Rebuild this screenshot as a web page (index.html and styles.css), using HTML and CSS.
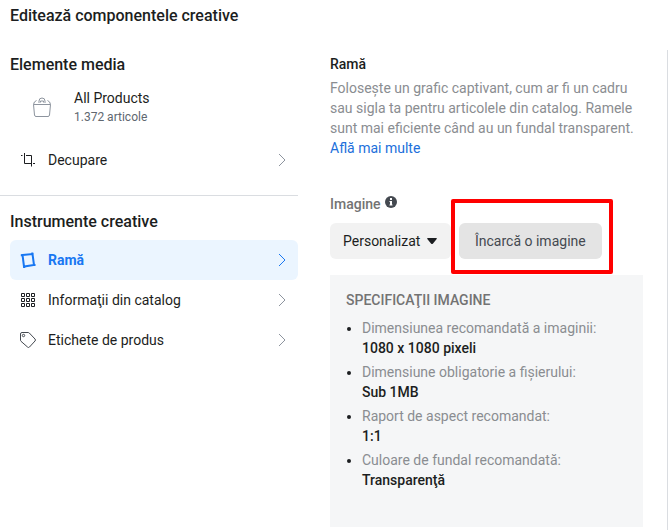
FILE: index.html
```html
<!DOCTYPE html>
<html lang="ro">
<head>
  <meta charset="UTF-8" />
  <meta name="viewport" content="width=device-width, initial-scale=1.0"/>
  <title>Editează componentele creative</title>
  <link rel="stylesheet" href="styles.css">
</head>
<body>

<h1 class="page-title">Editează componentele creative</h1>

<div class="editor">
  <nav class="sidebar">
    <section class="media">
      <h2>Elemente media</h2>
      <div class="product-set">
        <svg class="bag" width="20" height="20" viewBox="0 0 20 20" fill="none" stroke="#8d949e">
          <path d="M1.500 7.500h17l-1 10.500q-.2 1.500-1.500 1.500H4q-1.300 0-1.500-1.500z"/>
          <path d="M1.500 7.500q.3-3 3-4M18.500 7.500q-.3-3-3-4"/>
          <path d="M7 6V4a3 3 0 0 1 6 0v2M8.500 5.500V4h3v1.500"/>
        </svg>
        <div>
          <div class="product-name">All Products</div>
          <div class="product-count">1.372 articole</div>
        </div>
      </div>
      <button type="button" class="row">
        <svg width="16" height="16" viewBox="0 0 16 16" fill="none" stroke="#1c1e21">
          <path d="M1 3.500h1.500M4.500 1v10.500H11M6 3.500h5.500V14.500M13 11.500h2"/>
        </svg>
        <span>Decupare</span>
        <svg class="chevron" width="8" height="14" viewBox="0 0 8 14"><path d="M1 1l6 6-6 6"/></svg>
      </button>
    </section>

    <section class="tools">
      <h2>Instrumente creative</h2>
      <button type="button" class="row active">
        <svg width="16" height="16" viewBox="0 0 16 16" fill="none" stroke="#1877f2" stroke-width="2">
          <path d="M2.500 3l10-1 1.500 11-10 1.500z"/>
          <path d="M.8 3.200h2M12.300 .5v2M4.200 14v2M13.500 13h2"/>
        </svg>
        <span>Ramă</span>
        <svg class="chevron" width="8" height="14" viewBox="0 0 8 14"><path d="M1 1l6 6-6 6"/></svg>
      </button>
      <button type="button" class="row">
        <svg width="16" height="16" viewBox="0 0 16 16" fill="none" stroke="#1c1e21">
          <path d="M1.500 1.500h3v3h-3zM6.500 1.500h3v3h-3zM11.500 1.500h3v3h-3zM1.500 6.500h3v3h-3zM6.500 6.500h3v3h-3zM11.500 6.500h3v3h-3zM1.500 11.500h3v3h-3zM6.500 11.500h3v3h-3zM11.500 11.500h3v3h-3z"/>
        </svg>
        <span>Informaţii din catalog</span>
        <svg class="chevron" width="8" height="14" viewBox="0 0 8 14"><path d="M1 1l6 6-6 6"/></svg>
      </button>
      <button type="button" class="row">
        <svg width="16" height="16" viewBox="0 0 16 16" fill="none" stroke="#444950">
          <path d="M.5 2q0-1.500 1.500-1.500h6q.8 0 1.300.5l5.700 6q1 1 0 2l-5.500 6q-1 1-2 0L1 9.300Q.5 8.800.5 8z"/>
          <circle cx="3.500" cy="3.500" r="1.200"/>
        </svg>
        <span>Etichete de produs</span>
        <svg class="chevron" width="8" height="14" viewBox="0 0 8 14"><path d="M1 1l6 6-6 6"/></svg>
      </button>
    </section>
  </nav>

  <main class="panel">
    <h3>Ramă</h3>
    <p class="intro">Foloseşte un grafic captivant, cum ar fi un cadru sau sigla ta pentru articolele din catalog. Ramele sunt mai eficiente când au un fundal transparent. <a href="#">Află mai multe</a></p>

    <div class="field-label">
      <label for="image-type">Imagine</label>
      <svg width="12" height="12" viewBox="0 0 12 12">
        <circle cx="6" cy="6" r="6" fill="#444950"/>
        <path fill="#fff" d="M5 2h2v2H5zM4.500 5H7v3.500h.5v1h-3v-1H5V6h-.5z"/>
      </svg>
    </div>

    <div class="controls">
      <div class="picker">
        <select id="image-type">
          <option>Personalizat</option>
        </select>
        <svg class="caret" width="10" height="6" viewBox="0 0 10 6"><path fill="#1c1e21" d="M.8 0h8.400q1.200 0 .5 1L6 5.500q-1 1-2 0L.3 1Q-.4 0 .8 0z"/></svg>
      </div>
      <div class="upload">
        <button type="button">Încarcă o imagine</button>
        <span class="highlight"></span>
      </div>
    </div>

    <section class="specs">
      <h4>SPECIFICAŢII IMAGINE</h4>
      <ul>
        <li><span>Dimensiunea recomandată a imaginii:</span><strong>1080 x 1080 pixeli</strong></li>
        <li><span>Dimensiune obligatorie a fişierului:</span><strong>Sub 1MB</strong></li>
        <li><span>Raport de aspect recomandat:</span><strong>1:1</strong></li>
        <li><span>Culoare de fundal recomandată:</span><strong>Transparenţă</strong></li>
      </ul>
    </section>
  </main>
</div>

</body>
</html>
```
FILE: styles.css
```css
* {
  box-sizing: border-box;
}
body {
  font-family: Roboto, "Noto Sans", sans-serif;
  font-size: 14px;
  line-height: 20px;
  color: #1c1e21;
  background: white;
  margin: 0;
  min-height: 100vh;
  display: flex;
  flex-direction: column;
}
h1, h2, h3, h4, p, ul {
  margin: 0;
  padding: 0;
}
button, select {
  font: inherit;
  color: inherit;
  border: none;
  cursor: pointer;
}
.page-title {
  font-size: 16px;
  font-weight: 500;
  padding: 6px 10px 24px;
}
.editor {
  flex: 1;
  display: flex;
  gap: 32px;
}

/* left menu */
.sidebar {
  flex: 0 0 298px;
}
.media, .tools {
  padding-left: 10px;
}
.media {
  padding-top: 5px;
  padding-bottom: 15px;
  border-bottom: 1px solid #dadde1;
}
.tools {
  padding-top: 16px;
}
.sidebar h2 {
  font-size: 16px;
  font-weight: 500;
}
.tools h2 {
  margin-bottom: 8px;
}
.product-set {
  display: flex;
  align-items: center;
  gap: 22px;
  padding: 13px 0 15px 22px;
}
.product-name {
  margin-bottom: 1px;
}
.product-count {
  font-size: 12px;
  line-height: 16px;
  color: #606770;
}
.row {
  display: flex;
  align-items: center;
  gap: 12px;
  width: 100%;
  height: 40px;
  padding: 0 12px 0 10px;
  background: none;
  border-radius: 6px;
  text-align: left;
}
.chevron {
  margin-left: auto;
  fill: none;
  stroke: #8d949e;
}
.active {
  background: #ebf5ff;
  color: #1877f2;
  font-weight: 700;
}
.active .chevron {
  stroke: #1877f2;
}

/* right panel */
.panel {
  flex: 1;
  display: flex;
  flex-direction: column;
  padding: 4px 24px 3px 0;
  border-right: 1px solid #dadde1;
}
.panel h3 {
  font-size: 14px;
  font-weight: 500;
  margin-bottom: 4px;
}
.intro {
  color: #8a8d91;
}
.intro a {
  color: #216fdb;
  text-decoration: none;
}
.field-label {
  display: flex;
  align-items: center;
  gap: 4px;
  margin-top: 36px;
  color: #737373;
  font-weight: 500;
}
.field-label svg {
  margin-bottom: 4px;
}
.controls {
  display: flex;
  gap: 8px;
  margin: 9px 0 16px;
}
.picker, .upload {
  position: relative;
}
.picker select {
  appearance: none;
  height: 36px;
  padding: 0 30px 0 13px;
  background: #f2f2f2;
  border-radius: 6px;
}
.caret {
  position: absolute;
  right: 14px;
  top: 15px;
  pointer-events: none;
}
.upload button {
  height: 36px;
  padding: 0 16px;
  background: #e4e4e4;
  color: #444950;
  border-radius: 6px;
}
.highlight {
  position: absolute;
  inset: -24px -11px -15px -8px;
  border: 4px solid #ff0000;
  border-radius: 2px;
  pointer-events: none;
}
.specs {
  flex: 1;
  padding: 15px 16px;
  background: #f5f6f7;
}
.specs h4 {
  font-size: 14px;
  font-weight: 500;
  color: #737373;
  margin-bottom: 8px;
}
.specs ul {
  padding-left: 16px;
}
.specs li {
  margin-bottom: 4px;
}
.specs span {
  color: #8a8d91;
}
.specs strong {
  display: block;
  font-weight: 500;
}
```
